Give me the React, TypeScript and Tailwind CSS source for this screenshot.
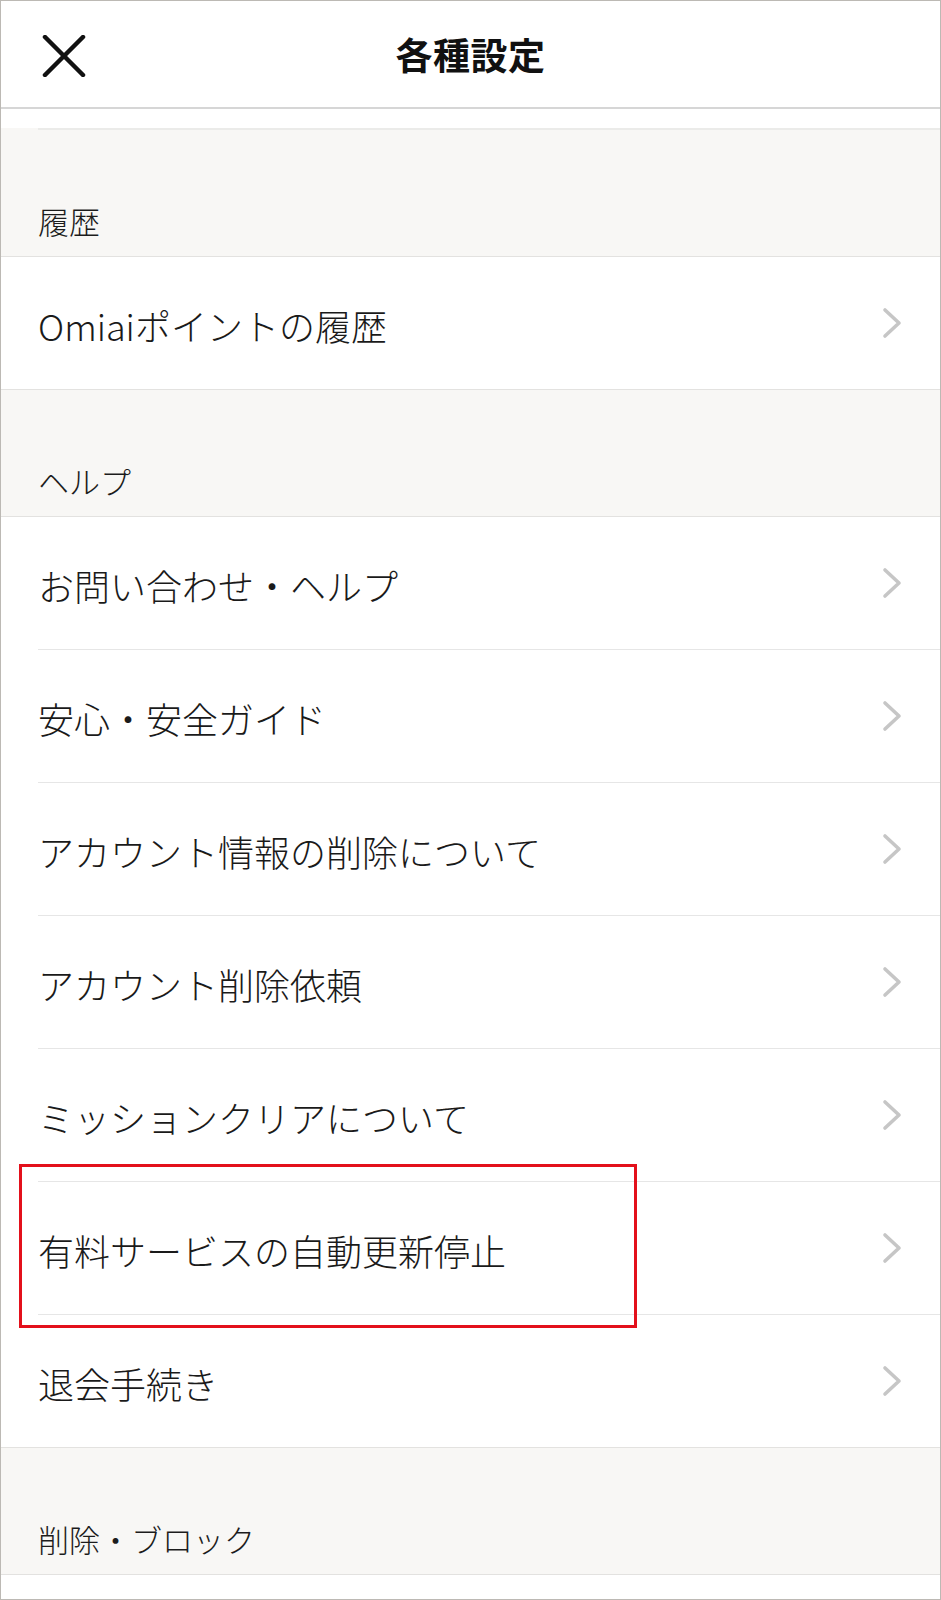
const font = { fontFamily: '"Noto Sans CJK JP", "Noto Sans", sans-serif' };

type Row = { label: string };

function Chevron() {
  return (
    <svg width="20" height="32" viewBox="0 0 20 32" fill="none">
      <polyline
        points="3,3 17,16 3,29"
        stroke="#c6c6c6"
        strokeWidth="3.6"
        strokeLinecap="round"
        strokeLinejoin="round"
      />
    </svg>
  );
}

function CloseIcon() {
  return (
    <svg width="44" height="42" viewBox="0 0 44 42" fill="none">
      <line x1="3" y1="2" x2="41" y2="40" stroke="#111" strokeWidth="4.5" strokeLinecap="round" />
      <line x1="41" y1="2" x2="3" y2="40" stroke="#111" strokeWidth="4.5" strokeLinecap="round" />
    </svg>
  );
}

function SectionHeader({ title }: { title: string }) {
  return (
    <div className="h-[127px] bg-[#f8f7f5] border-b border-[#e3e2e0] flex items-end pl-[37px] pb-[12px]">
      <span className="text-[31px] leading-[46px] font-light text-[#1c1c1c]">{title}</span>
    </div>
  );
}

function ListItem({ label, last }: { label: string; last?: boolean }) {
  return (
    <div className={`h-[133px] bg-white ${last ? 'border-b border-[#e3e2e0]' : ''}`}>
      <div
        className={`h-full ml-[37px] pr-[38px] flex items-center justify-between ${
          last ? '' : 'border-b border-[#e6e6e6]'
        }`}
      >
        <span className="text-[36px] leading-[52px] font-light text-[#1a1a1a] pt-[4px]">{label}</span>
        <Chevron />
      </div>
    </div>
  );
}

export default function App() {
  const help: Row[] = [
    { label: 'お問い合わせ・ヘルプ' },
    { label: '安心・安全ガイド' },
    { label: 'アカウント情報の削除について' },
    { label: 'アカウント削除依頼' },
    { label: 'ミッションクリアについて' },
    { label: '有料サービスの自動更新停止' },
    { label: '退会手続き' },
  ];

  return (
    <div style={font} className="relative w-[941px] h-[1600px] overflow-hidden bg-white border border-[#bcb9b4]">
      {/* ヘッダー */}
      <div className="relative h-[108px] border-b-2 border-[#d6d6d6] flex items-center justify-center">
        <div className="absolute left-[41px] top-[34px]">
          <CloseIcon />
        </div>
        <h1 className="text-[37px] font-bold text-[#111] tracking-[0.5px] pt-[2px]">各種設定</h1>
      </div>

      {/* 前のリストの末尾 */}
      <div className="h-[19px] bg-white" />
      <div className="h-[2px] bg-[#f8f7f5]">
        <div className="h-full ml-[37px] bg-[#ebebe9]" />
      </div>

      <SectionHeader title="履歴" />
      <ListItem label="Omiaiポイントの履歴" last />

      <SectionHeader title="ヘルプ" />
      {help.map((row, i) => (
        <ListItem key={row.label} label={row.label} last={i === help.length - 1} />
      ))}

      <SectionHeader title="削除・ブロック" />
      <div className="h-[30px] bg-white" />

      {/* 注目枠 */}
      <div className="absolute left-[18px] top-[1163px] w-[618px] h-[164px] border-[3px] border-[#e3101b]" />
    </div>
  );
}
